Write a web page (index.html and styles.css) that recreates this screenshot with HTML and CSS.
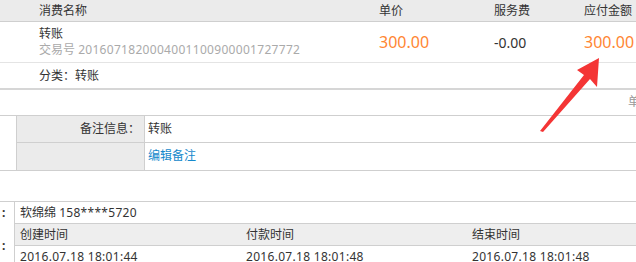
FILE: index.html
```html
<!DOCTYPE html>
<html lang="zh-CN">
<head>
    <meta charset="UTF-8">
    <title>订单详情</title>
    <link rel="stylesheet" href="styles.css">
</head>
<body>

<div class="order">
    <div class="order-head">
        <div class="col-name">消费名称</div>
        <div>单价</div>
        <div>服务费</div>
        <div>应付金额</div>
    </div>
    <div class="order-item">
        <div class="col-name">
            <div class="item-title">转账</div>
            <div class="trade-no">交易号 <span class="num">2016071820004001100900001727772</span></div>
        </div>
        <div class="price">300.00</div>
        <div class="fee">-0.00</div>
        <div class="price">300.00</div>
    </div>
    <div class="order-cat">分类：转账</div>
</div>

<div class="strip"><span class="strip-cut">单</span></div>

<div class="remark">
    <div class="remark-side"></div>
    <div class="remark-label">备注信息：</div>
    <div class="remark-value">转账</div>
    <div class="remark-label last"></div>
    <div class="remark-value last"><a href="#" class="edit-link">编辑备注</a></div>
</div>

<div class="gap"></div>

<div class="info">
    <div class="info-side top">:</div>
    <div class="info-value">软绵绵 <span class="num">158****5720</span></div>
    <div class="info-side bottom">:</div>
    <div class="info-times">
        <div class="times-head">
            <div>创建时间</div>
            <div>付款时间</div>
            <div>结束时间</div>
        </div>
        <div class="times-row num">
            <div>2016.07.18 18:01:44</div>
            <div>2016.07.18 18:01:48</div>
            <div>2016.07.18 18:01:48</div>
        </div>
    </div>
</div>

<!-- 标注箭头 -->
<svg class="mark-arrow" width="636" height="262" viewBox="0 0 636 262">
    <polygon points="599,58 597,87 590,79 543,132 540,131 584,75 577,70" fill="#f43535"/>
</svg>

</body>
</html>
```

FILE: styles.css
```css
body {
    margin: 0;
    width: 636px;
    height: 262px;
    overflow: hidden;
    position: relative;
    font-family: "Noto Sans", "Noto Sans CJK SC", sans-serif;
    font-size: 12px;
    color: #333;
    background-color: #fff;
}
.num {
    letter-spacing: 0.3px;
}
.order-head,
.order-item {
    display: grid;
    grid-template-columns: 379px 115px 90px 1fr;
}
.col-name {
    padding-left: 39px;
}
.order-head {
    height: 21px;
    line-height: 21px;
    background-color: #ebebeb;
    border-bottom: 1px solid #cfcfcf;
}
.order-item {
    height: 40px;
    border-bottom: 1px solid #e4e4e4;
    align-items: center;
}
.order-item .col-name {
    align-self: start;
    padding-top: 4px;
    line-height: 16px;
}
.trade-no {
    color: #aaa;
}
.price {
    font-size: 16px;
    color: #ff8633;
}
.fee {
    font-size: 14px;
    color: #333;
}
.order-cat {
    height: 25px;
    line-height: 25px;
    padding-left: 39px;
    border-bottom: 2px solid #d6d6d6;
}
.strip {
    height: 25px;
    line-height: 23px;
    text-align: right;
    white-space: nowrap;
    overflow: hidden;
}
.strip-cut {
    color: #999;
    margin-right: -4px;
}
.remark {
    display: grid;
    grid-template-columns: 17px 128px 1fr;
    grid-template-rows: 27px 27px;
    border-top: 1px solid #cfcfcf;
    border-bottom: 1px solid #cfcfcf;
}
.remark-side {
    grid-row: span 2;
    border-right: 1px solid #cfcfcf;
}
.remark-label {
    background-color: #ebebeb;
    border-right: 1px solid #cfcfcf;
    border-bottom: 1px solid #cfcfcf;
    text-align: right;
    padding-right: 4px;
    line-height: 26px;
}
.remark-value {
    border-bottom: 1px solid #cfcfcf;
    padding-left: 3px;
    line-height: 26px;
}
.remark .last {
    border-bottom: none;
}
.edit-link {
    color: #1689cc;
    text-decoration: none;
}
.gap {
    height: 30px;
}
.info {
    display: grid;
    grid-template-columns: 15px 1fr;
    border-top: 1px solid #cfcfcf;
}
.info-side {
    border-right: 1px solid #cfcfcf;
    font-weight: bold;
    padding-left: 2px;
}
.info-side.top {
    line-height: 21px;
}
.info-side.bottom {
    display: flex;
    align-items: center;
}
.info-value {
    height: 21px;
    line-height: 21px;
    padding-left: 5px;
    border-bottom: 1px solid #cfcfcf;
}
.times-head,
.times-row {
    display: grid;
    grid-template-columns: 226px 226px 1fr;
    padding-left: 5px;
    height: 21px;
    line-height: 21px;
}
.times-head {
    background-color: #eee;
    border-bottom: 1px solid #cfcfcf;
}
.mark-arrow {
    position: absolute;
    left: 0;
    top: 0;
    pointer-events: none;
}
```
